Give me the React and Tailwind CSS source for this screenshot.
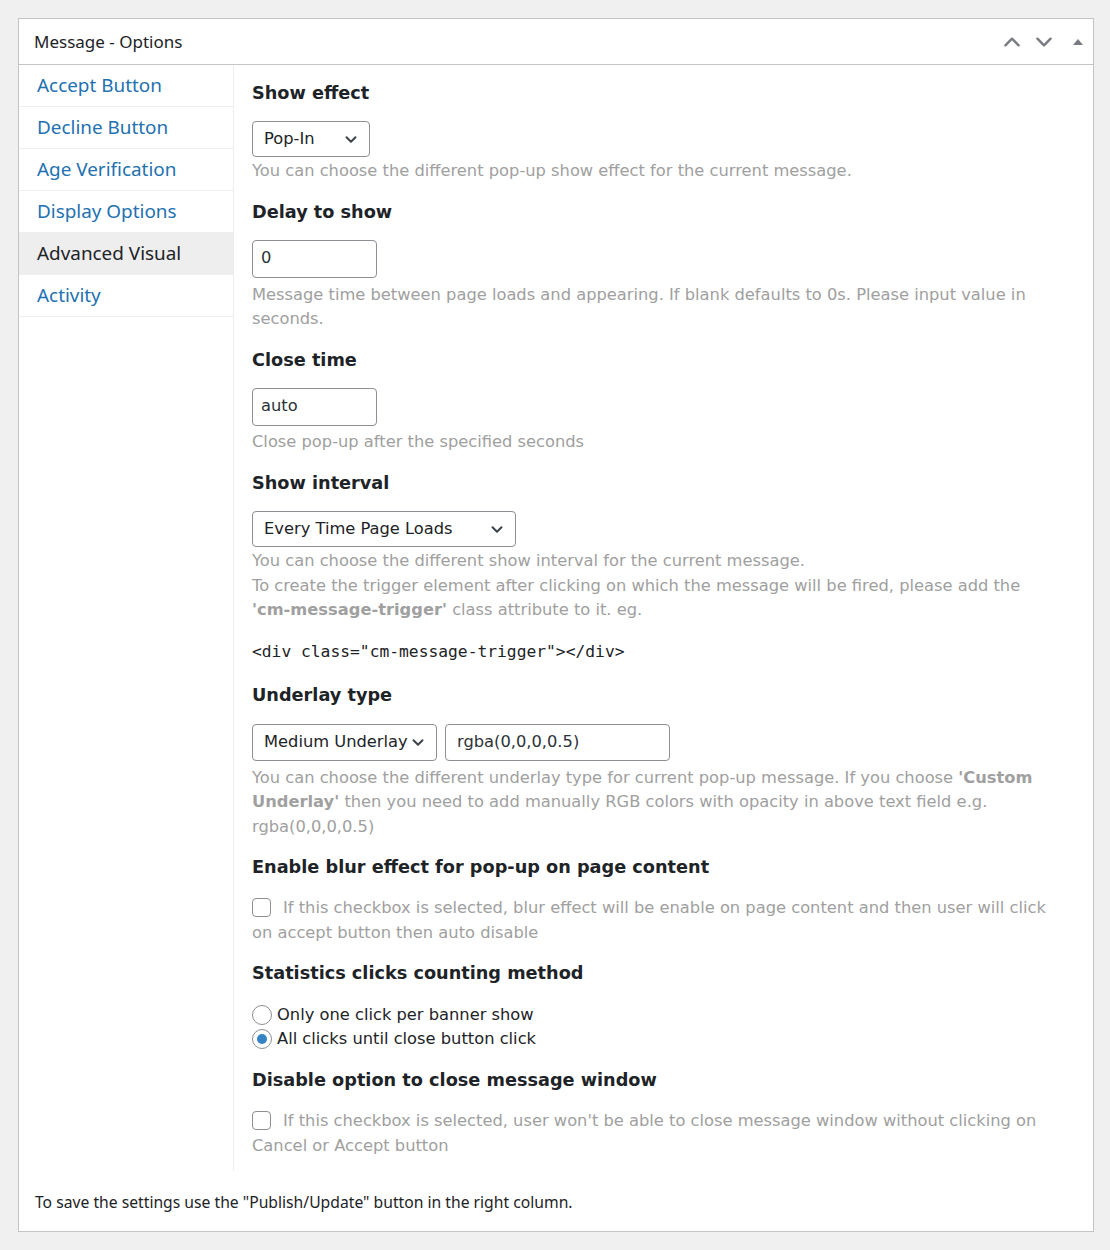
const tabs = [
  { label: 'Accept Button' },
  { label: 'Decline Button' },
  { label: 'Age Verification' },
  { label: 'Display Options' },
  { label: 'Advanced Visual', active: true },
  { label: 'Activity' },
]

function Chevron({ className }) {
  return (
    <svg viewBox="0 0 20 20" className={className} fill="none" stroke="currentColor" strokeWidth="2.2" strokeLinecap="round" strokeLinejoin="round">
      <path d="M5 8l5 5 5-5" />
    </svg>
  )
}

function Select({ value, width }) {
  return (
    <div className={`flex items-center justify-between border border-[#8c8f94] rounded-[4px] bg-white pl-[11px] pr-[9px] text-[#1d2327] ${width}`}>
      <span>{value}</span>
      <Chevron className="w-[18px] h-[18px] text-[#3c434a]" />
    </div>
  )
}

function Input({ value, width }) {
  return (
    <div className={`flex items-center border border-[#8c8f94] rounded-[4px] bg-white text-[#2c3338] ${width}`}>
      {value}
    </div>
  )
}

function Heading({ children, className = '' }) {
  return <h3 className={`text-[17.7px] leading-[24px] font-bold text-[#1d2327] ${className}`}>{children}</h3>
}

function Help({ children, className = '' }) {
  return <p className={`text-[#a0a0a0] leading-[24.5px] ${className}`}>{children}</p>
}

function Checkbox() {
  return <span className="inline-block align-[-4px] w-[19px] h-[19px] border border-[#8c8f94] rounded-[4px] bg-white mr-[12px]" />
}

function Radio({ checked }) {
  return (
    <span className="flex items-center justify-center w-[20px] h-[20px] border border-[#8c8f94] rounded-full bg-white mr-[5px]">
      {checked && <span className="w-[10px] h-[10px] rounded-full bg-[#3582c4]" />}
    </span>
  )
}

export default function App() {
  return (
    <div className="min-h-[1250px] bg-[#f0f0f1] pt-[18px] px-[18px] font-['DejaVu_Sans',sans-serif] text-[16.3px]">
      <div className="w-[1076px] bg-white border border-[#c3c4c7]">
        {/* header */}
        <div className="h-[46px] flex items-center justify-between border-b border-[#c3c4c7] pl-[15px] pr-[10px]">
          <h2 className="font-['Noto_Sans',sans-serif] text-[17px] text-[#1d2327]">Message - Options</h2>
          <div className="flex items-center text-[#787c82]">
            <svg viewBox="0 0 20 20" className="w-[22px] h-[22px] mr-[10px]" fill="none" stroke="currentColor" strokeWidth="2.2" strokeLinecap="round" strokeLinejoin="round">
              <path d="M4 13l6-6 6 6" />
            </svg>
            <svg viewBox="0 0 20 20" className="w-[22px] h-[22px] mr-[18px]" fill="none" stroke="currentColor" strokeWidth="2.2" strokeLinecap="round" strokeLinejoin="round">
              <path d="M4 7l6 6 6-6" />
            </svg>
            <svg viewBox="0 0 10 8" className="w-[10px] h-[8px]" fill="currentColor">
              <path d="M0 7L5 1l5 6z" />
            </svg>
          </div>
        </div>

        {/* body */}
        <div className="flex">
          <ul className="w-[215px] shrink-0 border-r border-[#eeeeee] font-['Noto_Sans',sans-serif] text-[18.9px]">
            {tabs.map((t) => (
              <li
                key={t.label}
                className={`h-[42px] flex items-center pl-[18px] border-b border-[#eeeeee] ${t.active ? 'bg-[#eeeeee] text-[#1d2327]' : 'text-[#2271b1]'}`}
              >
                {t.label}
              </li>
            ))}
          </ul>

          <div className="flex-1 pl-[18px] pr-[34px] pt-[16px] pb-[13px]">
            <Heading>Show effect</Heading>
            <div className="mt-[16px]"><Select value="Pop-In" width="w-[118px] h-[36px]" /></div>
            <Help className="mt-[2px]">You can choose the different pop-up show effect for the current message.</Help>

            <Heading className="mt-[16px]">Delay to show</Heading>
            <div className="mt-[16px]"><Input value="0" width="w-[125px] h-[38px] px-[8px]" /></div>
            <Help className="mt-[5px]">Message time between page loads and appearing. If blank defaults to 0s. Please input value in seconds.</Help>

            <Heading className="mt-[16px]">Close time</Heading>
            <div className="mt-[16px]"><Input value="auto" width="w-[125px] h-[38px] px-[8px]" /></div>
            <Help className="mt-[4px]">Close pop-up after the specified seconds</Help>

            <Heading className="mt-[17px]">Show interval</Heading>
            <div className="mt-[16px]"><Select value="Every Time Page Loads" width="w-[264px] h-[36px]" /></div>
            <Help className="mt-[2px]">
              You can choose the different show interval for the current message.
              <br />
              To create the trigger element after clicking on which the message will be fired, please add the{' '}
              <b className="whitespace-nowrap">'cm-message-trigger'</b> class attribute to it. eg.
            </Help>
            <p className="mt-[17px] font-['DejaVu_Sans_Mono',monospace] text-[16.3px] leading-[24px] text-[#1d2327]">
              {'<div class="cm-message-trigger"></div>'}
            </p>

            <Heading className="mt-[19px]">Underlay type</Heading>
            <div className="mt-[17px] flex gap-[8px]">
              <Select value="Medium Underlay" width="w-[185px] h-[37px]" />
              <Input value="rgba(0,0,0,0.5)" width="w-[225px] h-[37px] pl-[11px]" />
            </div>
            <Help className="mt-[5px]">
              You can choose the different underlay type for current pop-up message. If you choose <b>'Custom Underlay'</b> then you need to add manually RGB colors with opacity in above text field e.g. rgba(0,0,0,0.5)
            </Help>

            <Heading className="mt-[16px]">Enable blur effect for pop-up on page content</Heading>
            <Help className="mt-[17px]">
              <Checkbox />If this checkbox is selected, blur effect will be enable on page content and then user will click on accept button then auto disable
            </Help>

            <Heading className="mt-[16px]">Statistics clicks counting method</Heading>
            <div className="mt-[18px] leading-[24px] text-[#1d2327]">
              <div className="h-[24px] flex items-center"><Radio />Only one click per banner show</div>
              <div className="h-[24px] flex items-center"><Radio checked />All clicks until close button click</div>
            </div>

            <Heading className="mt-[17px]">Disable option to close message window</Heading>
            <Help className="mt-[17px]">
              <Checkbox />If this checkbox is selected, user won't be able to close message window without clicking on Cancel or Accept button
            </Help>
          </div>
        </div>

        {/* footer */}
        <div className="h-[60px] flex items-center pt-[4px] pl-[16px] font-['Noto_Sans',sans-serif] text-[15.7px] text-[#1d2327]">
          To save the settings use the "Publish/Update" button in the right column.
        </div>
      </div>
    </div>
  )
}
